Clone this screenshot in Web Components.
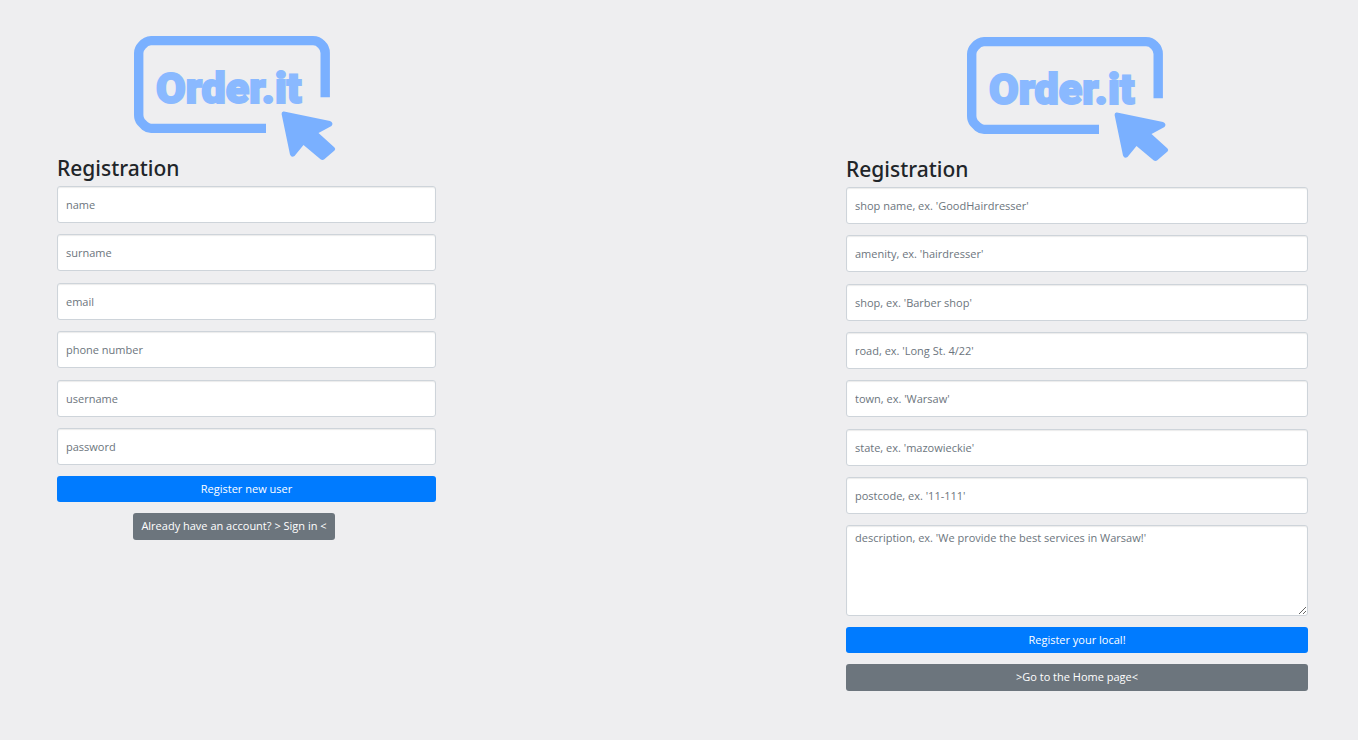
<!DOCTYPE html>
<html lang="en">
<head>
<meta charset="utf-8">
<meta name="viewport" content="width=device-width, initial-scale=1">
<title>Order.it - Registration</title>
<style>
  body {
    margin: 0;
    background: #eeeef0;
    color: #212529;
    font-family: "Open Sans", "Noto Sans", sans-serif;
    font-size: 11px;
    line-height: 16px;
  }
</style>
</head>
<body>
<registration-page>
  <registration-panel slot="user" heading="Registration">
    <text-field hint="name"></text-field>
    <text-field hint="surname"></text-field>
    <text-field hint="email"></text-field>
    <text-field hint="phone number" type="tel"></text-field>
    <text-field hint="username"></text-field>
    <text-field hint="password" type="password"></text-field>
    <action-button slot="actions">Register new user</action-button>
    <action-link slot="actions" compact href="#sign-in">Already have an account? &gt; Sign in &lt;</action-link>
  </registration-panel>
  <registration-panel slot="shop" heading="Registration">
    <text-field hint="shop name, ex. 'GoodHairdresser'"></text-field>
    <text-field hint="amenity, ex. 'hairdresser'"></text-field>
    <text-field hint="shop, ex. 'Barber shop'"></text-field>
    <text-field hint="road, ex. 'Long St. 4/22'"></text-field>
    <text-field hint="town, ex. 'Warsaw'"></text-field>
    <text-field hint="state, ex. 'mazowieckie'"></text-field>
    <text-field hint="postcode, ex. '11-111'"></text-field>
    <area-field slot="actions" hint="description, ex. 'We provide the best services in Warsaw!'"></area-field>
    <action-button slot="actions">Register your local!</action-button>
    <action-link slot="actions" href="#home">&gt;Go to the Home page&lt;</action-link>
  </registration-panel>
</registration-page>
<script>
  const define = (name, html, setup) => customElements.define(name, class extends HTMLElement {
    connectedCallback() {
      if (this.shadowRoot) return;
      this.attachShadow({ mode: "open" }).innerHTML = html;
      if (setup) setup(this, this.shadowRoot);
    }
  });

  define("registration-page", `
    <style>
      :host { display: block; }
      main {
        display: grid;
        grid-template-columns: 379fr 410fr 462fr;
        padding: 36px 50px 48px 57px;
        align-items: start;
      }
      ::slotted([slot="user"]) { grid-column: 1; --fields: 279px; --logo-inset: 24px; }
      ::slotted([slot="shop"]) { grid-column: 3; --fields: 327px; --logo-inset: 18px; margin-top: 1px; }
    </style>
    <main><slot name="user"></slot><slot name="shop"></slot></main>`);

  define("registration-panel", `
    <style>
      :host { display: block; }
      form { display: flex; flex-direction: column; gap: 11px; }
      order-logo { margin-right: var(--logo-inset); }
      h1 {
        margin: -19px 0 -8px;
        font: 500 21px/30px "Noto Sans", "Open Sans", sans-serif;
      }
      .fields {
        display: flex; flex-direction: column; justify-content: space-between;
        min-height: var(--fields);
      }
    </style>
    <form>
      <order-logo></order-logo>
      <h1></h1>
      <div class="fields"><slot></slot></div>
      <slot name="actions"></slot>
    </form>`, (el, root) => {
      root.querySelector("h1").textContent = el.getAttribute("heading");
    });

  define("order-logo", `
    <style>
      :host { display: flex; justify-content: center; }
      svg { display: block; width: 202px; height: 125px; overflow: visible; }
      text { font: 900 43px Roboto, "Liberation Sans", sans-serif; }
    </style>
    <svg viewBox="0 0 202 125" role="img" aria-label="Order.it">
      <path d="M132 92.4H17Q14 92.4 11 90L7 86Q4.7 83 4.7 79V17Q4.7 13 8 9.5Q12 4.6 17 4.6H179Q184 4.6 187.5 8.5Q191.2 12 191.2 17V61.3" fill="none" stroke="#7ab0ff" stroke-width="9.4"/>
      <text x="22" y="67" fill="#8ab9ff" stroke="#8ab9ff" stroke-width="2">Order.it</text>
      <path d="M150 75.500L196 85Q200 87 197.500 90L184.500 97L200.500 111.500Q202 113 200.500 114.500L190 123.500Q188.300 124.500 186.500 123.200L169.500 109L160.500 120Q157.500 122 156 118.500L147.600 78Q147.500 75 150 75.500Z" fill="#7ab0ff"/>
    </svg>`);

  const control = `
      :host { display: block; }
      input, textarea {
        display: block; box-sizing: border-box; width: 100%; margin: 0;
        padding: 4px 8px; border: 1px solid #ced4da; border-radius: 3px;
        background: #fff; color: #495057; font: inherit;
        box-shadow: inset 0 1px 1px rgba(0, 0, 0, 0.08);
      }
      ::placeholder { color: #6c757d; opacity: 1; }`;

  const applyHint = (el, field) => {
    const hint = el.getAttribute("hint");
    field.placeholder = hint;
    field.setAttribute("aria-label", hint);
  };

  define("text-field", `
    <style>${control} input { height: 37px; }</style>
    <input>`, (el, root) => {
      const input = root.querySelector("input");
      input.type = el.getAttribute("type") || "text";
      applyHint(el, input);
    });

  define("area-field", `
    <style>${control} textarea { height: 91px; resize: vertical; }</style>
    <textarea></textarea>`, (el, root) => applyHint(el, root.querySelector("textarea")));

  const action = `
      :host { display: flex; justify-content: center; }
      button, a {
        display: block; box-sizing: border-box; width: 100%; margin: 0;
        padding: 5px 8px; border: 0; border-radius: 3px;
        color: #fff; font: inherit; text-align: center; text-decoration: none;
        cursor: pointer;
      }`;

  define("action-button", `
    <style>${action} button { background: #007bff; }</style>
    <button type="button"><slot></slot></button>`);

  define("action-link", `
    <style>${action}
      a { background: #6c757d; padding-bottom: 6px; }
      :host([compact]) { margin-right: 25px; }
      :host([compact]) a { width: auto; }
    </style>
    <a><slot></slot></a>`, (el, root) => {
      root.querySelector("a").href = el.getAttribute("href");
    });
</script>
</body>
</html>
